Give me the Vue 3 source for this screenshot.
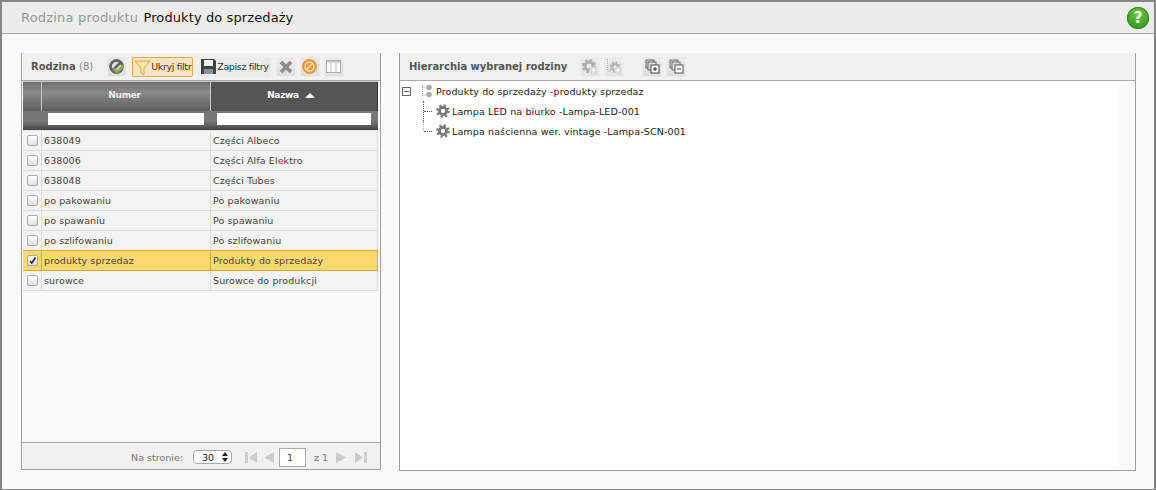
<template>
  <div class="page">
    <header class="title-bar">
      <h1><span class="muted">Rodzina produktu</span> Produkty do sprzedaży</h1>
      <span class="help">?</span>
    </header>

    <div class="columns">
      <section class="panel left">
        <div class="toolbar">
          <span class="panel-title">Rodzina <em>(8)</em></span>
          <button class="tool first">
            <svg width="18" height="18" viewBox="0 0 18 18">
              <circle cx="8.5" cy="8.5" r="6" fill="none" stroke="#666" stroke-width="2.8" />
              <path d="M4 13 13 4" stroke="#666" stroke-width="2.6" />
              <path d="M6 10.5 9 14 15.5 7.5" fill="none" stroke="#8fb04a" stroke-width="2.6" />
            </svg>
          </button>
          <button class="tool text active">
            <svg width="17" height="18" viewBox="0 0 17 18">
              <path d="M1 3h15l-6 7v7l-3-2v-5z" fill="#f6e7a0" stroke="#d9a94a" />
            </svg>
            Ukryj filtr
          </button>
          <button class="tool text save">
            <svg width="17" height="17" viewBox="0 0 17 17">
              <path d="M1 1h13l2 2v13H1z" fill="#3d4248" />
              <rect x="4" y="2" width="9" height="6" fill="#f2f2f2" />
              <rect x="4" y="11" width="9" height="5" fill="#8b9096" />
            </svg>
            Zapisz filtry
          </button>
          <button class="tool">
            <svg width="16" height="16" viewBox="0 0 16 16">
              <path d="M3 3l10 10M13 3 3 13" stroke="#8c8c8c" stroke-width="3.8" />
            </svg>
          </button>
          <button class="tool tight">
            <svg width="17" height="17" viewBox="0 0 17 17">
              <circle cx="8.5" cy="8.5" r="7.5" fill="#ee9638" />
              <circle cx="8.5" cy="8.5" r="4.4" fill="none" stroke="#fde3c2" stroke-width="1.5" />
              <path d="M5.5 11.5l6-6" stroke="#fde3c2" stroke-width="1.5" />
            </svg>
          </button>
          <button class="tool tight">
            <svg width="15" height="15" viewBox="0 0 15 15">
              <rect x="0.5" y="1.5" width="14" height="12" fill="#fafafa" stroke="#aaa" />
              <path d="M5 1.5v12M10 1.5v12" stroke="#c4c4c4" />
              <rect x="1" y="2" width="13" height="1.5" fill="#c8c8c8" />
            </svg>
          </button>
        </div>

        <div class="table-wrap">
          <div class="grid-row head">
            <div></div>
            <div class="plain">Numer</div>
            <div class="sorted">Nazwa <i class="arrow"></i></div>
          </div>
          <div class="grid-row filters">
            <div></div>
            <div><span class="filter-input"></span></div>
            <div><span class="filter-input"></span></div>
          </div>
          <div
            v-for="row in rows"
            :key="row.code"
            class="grid-row item"
            :class="{ selected: row.checked }"
          >
            <div class="check-cell">
              <span class="check"><svg v-if="row.checked" width="9" height="9" viewBox="0 0 9 9"><path d="M2 5 3.8 7 7.5 1.5" fill="none" stroke="#222" stroke-width="1.5" /></svg></span>
            </div>
            <div>{{ row.code }}</div>
            <div>{{ row.name }}</div>
          </div>
        </div>

        <footer class="pager">
          <span>Na stronie:</span>
          <span class="select">30
            <svg width="6" height="10" viewBox="0 0 6 10"><path d="M3 0l3 4H0zM3 10 0 6h6z" fill="#222" /></svg>
          </span>
          <span class="pager-nav">
            <svg width="12" height="11" viewBox="0 0 12 11"><path d="M0 0h3v11H0zM12 0v11L4 5.5z" fill="#ccc" /></svg>
            <svg width="10" height="11" viewBox="0 0 10 11" class="gap"><path d="M10 0v11L0 5.5z" fill="#ccc" /></svg>
          </span>
          <span class="page-input">1</span>
          <span class="page-count">z 1</span>
          <span class="pager-nav">
            <svg width="10" height="11" viewBox="0 0 10 11"><path d="M0 0v11l10-5.5z" fill="#ccc" /></svg>
            <svg width="12" height="11" viewBox="0 0 12 11" class="gap"><path d="M12 0H9v11h3zM0 0v11l8-5.5z" fill="#ccc" /></svg>
          </span>
        </footer>
      </section>

      <section class="panel right">
        <div class="toolbar tree-tools">
          <span class="panel-title">Hierarchia wybranej rodziny</span>
          <button class="tool off first-r">
            <svg width="18" height="18" viewBox="0 0 18 18">
              <circle cx="8" cy="8" r="4" fill="none" stroke="#aeaeae" stroke-width="3" />
              <circle cx="8" cy="8" r="6" fill="none" stroke="#aeaeae" stroke-width="2.2" stroke-dasharray="2.4 2.31" />
              <circle cx="12.5" cy="12.5" r="4" fill="#d8d8d8" />
              <path d="M10.5 12.5h4M12.5 10.5v4" stroke="#fff" stroke-width="1.4" />
            </svg>
          </button>
          <button class="tool off">
            <svg width="18" height="18" viewBox="0 0 18 18">
              <path d="M2.5 1v12h3" fill="none" stroke="#aaa" stroke-dasharray="1 1" />
              <circle cx="10" cy="9" r="3" fill="none" stroke="#b6b6b6" stroke-width="2.6" />
              <circle cx="10" cy="9" r="4.8" fill="none" stroke="#b6b6b6" stroke-width="1.8" stroke-dasharray="1.9 1.87" />
              <circle cx="13" cy="12.5" r="3.6" fill="#d8d8d8" />
              <path d="M11 12.5h4M13 10.5v4" stroke="#fff" stroke-width="1.3" />
            </svg>
          </button>
          <button class="tool wide-gap">
            <svg width="15" height="15" viewBox="0 0 15 15">
              <rect x="1" y="1" width="8" height="8" fill="#ccc" stroke="#666" />
              <rect x="3" y="3" width="8" height="8" fill="#ddd" stroke="#666" />
              <rect x="6" y="6" width="8" height="8" fill="#fff" stroke="#444" />
              <path d="M8 10h4M10 8v4" stroke="#222" />
            </svg>
          </button>
          <button class="tool">
            <svg width="15" height="15" viewBox="0 0 15 15">
              <rect x="1" y="1" width="8" height="8" fill="#ccc" stroke="#777" />
              <rect x="3" y="3" width="8" height="8" fill="#ddd" stroke="#777" />
              <rect x="6" y="6" width="8" height="8" fill="#fff" stroke="#555" />
              <path d="M8 10h4" stroke="#333" />
            </svg>
          </button>
        </div>

        <div class="tree">
          <div class="tree-root">
            <span class="toggle"></span>
            <svg width="13" height="14" viewBox="0 0 13 14" class="root-icon">
              <path d="M1.5 1v11M1.5 3h3M1.5 11h3" stroke="#999" stroke-dasharray="1 1" fill="none" />
              <circle cx="8" cy="3.5" r="2.8" fill="#aaa" />
              <circle cx="8" cy="10.5" r="2.8" fill="#aaa" />
            </svg>
            Produkty do sprzedaży -produkty sprzedaz
          </div>
          <div v-for="(leaf, i) in leaves" :key="leaf" class="tree-leaf" :class="{ last: i === leaves.length - 1 }">
            <svg width="14" height="14" viewBox="0 0 15 15">
              <circle cx="7.5" cy="7.5" r="3.8" fill="none" stroke="#7a7a7a" stroke-width="3" />
              <circle cx="7.5" cy="7.5" r="6" fill="none" stroke="#7a7a7a" stroke-width="2.6" stroke-dasharray="2.4 2.31" />
            </svg>
            {{ leaf }}
          </div>
        </div>
      </section>
    </div>
  </div>
</template>

<script setup>
const rows = [
  { code: '638049', name: 'Części Albeco' },
  { code: '638006', name: 'Części Alfa Elektro' },
  { code: '638048', name: 'Części Tubes' },
  { code: 'po pakowaniu', name: 'Po pakowaniu' },
  { code: 'po spawaniu', name: 'Po spawaniu' },
  { code: 'po szlifowaniu', name: 'Po szlifowaniu' },
  { code: 'produkty sprzedaz', name: 'Produkty do sprzedaży', checked: true },
  { code: 'surowce', name: 'Surowce do produkcji' },
];

const leaves = [
  'Lampa LED na biurko -Lampa-LED-001',
  'Lampa naścienna wer. vintage -Lampa-SCN-001',
];
</script>

<style>
html, body { margin: 0; background: #fff; }
</style>

<style scoped>
.page {
  width: 1156px;
  height: 490px;
  box-sizing: border-box;
  border: 2px solid #858585;
  border-bottom-width: 1px;
  background: #f9f9f9;
  font-family: "DejaVu Sans", sans-serif;
  font-size: 10px;
  color: #333;
  overflow: hidden;
}

.title-bar {
  height: 32px;
  box-sizing: border-box;
  border-bottom: 1px solid #a9a9a9;
  background: #ececec;
  display: flex;
  align-items: center;
  justify-content: space-between;
  padding: 0 5px 0 19px;
}
.title-bar h1 { margin: 0; font-size: 13px; font-weight: 400; color: #111; letter-spacing: 0.1px; }
.muted { color: #999; margin-right: 1px; letter-spacing: 0.2px; }
.help {
  width: 22px;
  height: 22px;
  border-radius: 50%;
  background: radial-gradient(circle at 50% 30%, #6cc644, #2d8c1a);
  box-shadow: inset 0 0 0 1px #3b9124;
  color: #fff;
  font-weight: 700;
  font-size: 15px;
  line-height: 22px;
  text-align: center;
}

.columns {
  display: flex;
  align-items: flex-start;
  gap: 18px;
  padding: 19px 18px 0 19px;
}

.panel {
  box-sizing: border-box;
  border: 1px solid #a0a0a0;
  border-top: 0;
  display: flex;
  flex-direction: column;
}
.left { width: 360px; height: 417px; }
.right { width: 737px; height: 418px; background: #fff; }

.toolbar {
  height: 28px;
  flex: none;
  box-sizing: border-box;
  background: #f1f1f1;
  border-bottom: 1px solid #a8a8a8;
  display: flex;
  align-items: center;
  gap: 5px;
  padding-left: 9px;
}
.tree-tools { gap: 4px; }
.panel-title { font-weight: 700; color: #555; font-size: 10px; letter-spacing: -0.03px; }
.panel-title em { font-style: normal; font-weight: 400; color: #888; }

.tool {
  height: 20px;
  min-width: 20px;
  padding: 0;
  border: 0;
  border-radius: 2px;
  background: linear-gradient(#ececec, #dedede);
  box-shadow: inset 0 0 0 1px #ececec;
  display: inline-flex;
  align-items: center;
  justify-content: center;
  font: inherit;
  color: #333;
}
.tool.first { margin-left: 9px; }
.tool.tight { margin-left: -1px; }
.tool.text { font-size: 9.5px; letter-spacing: -0.35px; padding: 0 2px; }
.tool.active {
  background: #fde3c2;
  box-shadow: inset 0 0 0 1px #f0a94e;
}
.tool.save { background: #ececec; }
.tool.off { background: linear-gradient(#ececec, #e4e4e4); }
.tool.off.first-r { margin-left: 9px; }
.tool.wide-gap { margin-left: 14px; }

.table-wrap {
  flex: 1;
  padding: 0 2px 0 1px;
  min-height: 0;
}
.grid-row {
  display: grid;
  grid-template-columns: 19px 169px 1fr;
}
.head {
  height: 30px;
  color: #eee;
  font-weight: 700;
  font-size: 9px;
  letter-spacing: -0.3px;
  border-top: 1px solid #c9c9c9;
  box-sizing: border-box;
}
.head > div {
  background: linear-gradient(#6d6d6d, #8a8a8a 35%, #5f5f5f);
  border-right: 1px solid #c9c9c9;
  display: flex;
  align-items: center;
  justify-content: center;
  padding-bottom: 3px;
}
.head > .plain { padding-right: 3px; }
.head > .sorted {
  background: #555;
  gap: 6px;
  color: #fff;
  border-right-color: #333;
  padding-right: 6px;
}
.arrow {
  width: 0;
  height: 0;
  border: 5px solid transparent;
  border-top: 0;
  border-bottom: 5px solid #fff;
}
.filters {
  height: 20px;
  box-sizing: border-box;
  border-bottom: 1px solid #e4e4e4;
}
.filters > div {
  background: linear-gradient(#777, #777 55%, #444);
  padding: 2px 7px 0 6px;
  box-sizing: border-box;
}
.filter-input { display: block; height: 12px; background: #fff; }

.item {
  height: 20px;
  box-sizing: border-box;
  background: #f3f3f3;
  border-bottom: 1px solid #dcdcdc;
  color: #444;
  font-size: 9.5px;
  letter-spacing: 0.1px;
  line-height: 19px;
}
.item > div {
  border-right: 1px solid #dcdcdc;
  padding-left: 2px;
}
.item.selected {
  background: #fdd96f;
  border-bottom-color: #e5a532;
  box-shadow: 0 -1px 0 #e5a532;
  position: relative;
}
.item.selected > div { border-right-color: #e5a532; }
.check-cell { display: flex; align-items: center; justify-content: center; padding: 0 !important; }
.check {
  width: 9px;
  height: 9px;
  border: 1px solid #aaa;
  border-radius: 2px;
  background: linear-gradient(#fff, #ddd);
  display: flex;
}

.pager {
  height: 27px;
  flex: none;
  box-sizing: border-box;
  background: #f1f1f1;
  border-top: 1px solid #a8a8a8;
  display: flex;
  align-items: center;
  justify-content: flex-end;
  padding: 2px 13px 0 0;
  color: #777;
  font-size: 9.5px;
}
.select {
  margin-left: 10px;
  width: 39px;
  height: 14px;
  box-sizing: border-box;
  border: 1px solid #aaa;
  border-radius: 4px;
  background: #fff;
  color: #222;
  display: flex;
  align-items: center;
  justify-content: space-between;
  padding: 0 3px 0 8px;
}
.pager-nav { display: inline-flex; align-items: center; margin-left: 13px; }
.pager-nav .gap { margin-left: 7px; }
.page-input {
  margin-left: 5px;
  width: 27px;
  height: 19px;
  box-sizing: border-box;
  border: 1px solid #aaa;
  background: #fff;
  color: #444;
  padding: 3px 0 0 7px;
}
.page-count { margin-left: 8px; }
.page-count + .pager-nav { margin-left: 8px; }
.page-count + .pager-nav .gap { margin-left: 9px; }

.tree {
  flex: 1;
  padding: 0 0 0 2px;
  border-right: 16px solid #fafafa;
  color: #222;
  font-size: 9.5px;
  letter-spacing: 0.13px;
}
.tree-root {
  height: 20px;
  display: flex;
  align-items: center;
}
.toggle {
  width: 9px;
  height: 9px;
  box-sizing: border-box;
  border: 1px solid #666;
  background: linear-gradient(#666, #666) center / 5px 1px no-repeat #fff;
  margin-right: 10px;
}
.root-icon { margin-right: 2px; }
.tree-leaf {
  height: 20px;
  display: flex;
  align-items: center;
  gap: 2px;
  padding-left: 34px;
  position: relative;
}
.tree-leaf::before {
  content: "";
  position: absolute;
  left: 21px;
  top: 0;
  bottom: 0;
  border-left: 1px dotted #555;
}
.tree-leaf.last::before { bottom: 10px; border-left-color: #aaa; }
.tree-leaf::after {
  content: "";
  position: absolute;
  left: 22px;
  width: 8px;
  top: 10px;
  border-top: 1px dotted #555;
}
</style>
